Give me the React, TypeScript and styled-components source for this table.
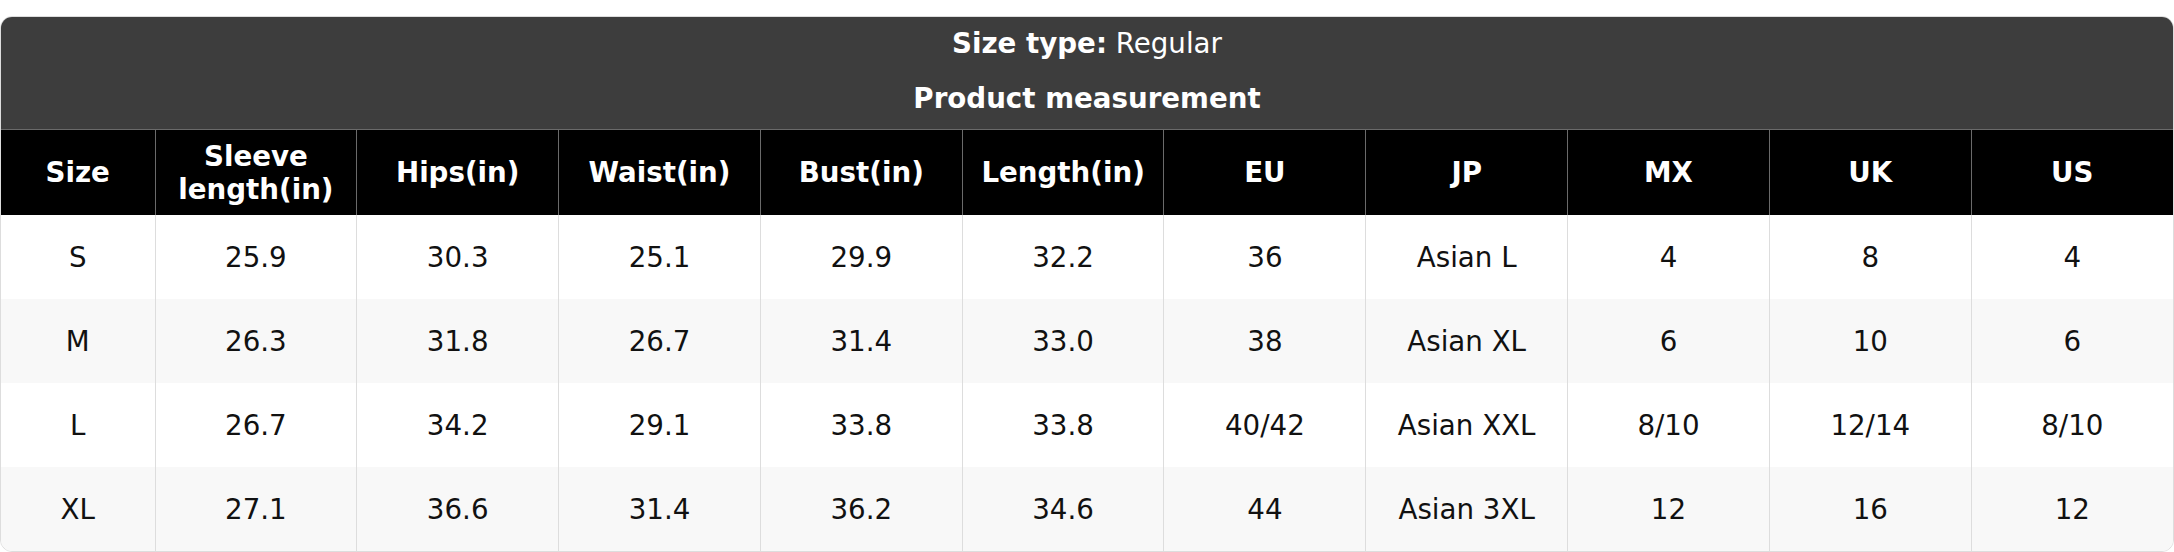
import styled, { createGlobalStyle } from "styled-components";

const GlobalStyle = createGlobalStyle`
  html, body {
    margin: 0;
    padding: 0;
    background: #ffffff;
  }
  body {
    font-family: "DejaVu Sans", "Liberation Sans", sans-serif;
  }
`;

const Page = styled.div`
  padding-top: 16px;
`;

const ChartCard = styled.div`
  border: 1px solid #dddddd;
  border-radius: 12px;
  overflow: hidden;
  background: #ffffff;
`;

const ChartHeader = styled.div`
  display: flex;
  flex-direction: column;
  align-items: center;
  gap: 22px;
  padding: 10px 0 14px;
  background: #3d3d3d;
  color: #ffffff;
  font-size: 27.7px;
  line-height: 33px;
`;

const HeaderLine = styled.div<{ $bold?: boolean }>`
  font-weight: ${(p) => (p.$bold ? 700 : 400)};

  strong {
    font-weight: 700;
  }
`;

const SizeTable = styled.table`
  width: 100%;
  table-layout: fixed;
  border-collapse: collapse;
  font-size: 27.7px;
  line-height: 33px;
`;

const HeadCell = styled.th`
  height: 85px;
  padding: 0 6px;
  background: #000000;
  color: #ffffff;
  font-weight: 700;
  text-align: center;
  vertical-align: middle;
  border: 1px solid #6a6a6a;
  border-bottom: none;

  &:first-child {
    border-left: none;
  }
  &:last-child {
    border-right: none;
  }
`;

const BodyRow = styled.tr<{ $striped: boolean }>`
  background: ${(p) => (p.$striped ? "#f8f8f8" : "#ffffff")};
`;

const BodyCell = styled.td`
  height: 84px;
  padding: 0 6px;
  color: #111111;
  text-align: center;
  vertical-align: middle;
  border-left: 1px solid #dddddd;

  &:first-child {
    border-left: none;
  }
`;

const columns = [
  "Size",
  "Sleeve length(in)",
  "Hips(in)",
  "Waist(in)",
  "Bust(in)",
  "Length(in)",
  "EU",
  "JP",
  "MX",
  "UK",
  "US",
];

const rows = [
  ["S", "25.9", "30.3", "25.1", "29.9", "32.2", "36", "Asian L", "4", "8", "4"],
  ["M", "26.3", "31.8", "26.7", "31.4", "33.0", "38", "Asian XL", "6", "10", "6"],
  ["L", "26.7", "34.2", "29.1", "33.8", "33.8", "40/42", "Asian XXL", "8/10", "12/14", "8/10"],
  ["XL", "27.1", "36.6", "31.4", "36.2", "34.6", "44", "Asian 3XL", "12", "16", "12"],
];

export default function App() {
  return (
    <Page>
      <GlobalStyle />
      <ChartCard>
        <ChartHeader>
          <HeaderLine>
            <strong>Size type:</strong> Regular
          </HeaderLine>
          <HeaderLine $bold>Product measurement</HeaderLine>
        </ChartHeader>
        <SizeTable>
          <colgroup>
            <col style={{ width: 154 }} />
            {columns.slice(1).map((c) => (
              <col key={c} />
            ))}
          </colgroup>
          <thead>
            <tr>
              {columns.map((c) => (
                <HeadCell key={c}>{c}</HeadCell>
              ))}
            </tr>
          </thead>
          <tbody>
            {rows.map((r, i) => (
              <BodyRow key={r[0]} $striped={i % 2 === 1}>
                {r.map((v, j) => (
                  <BodyCell key={j}>{v}</BodyCell>
                ))}
              </BodyRow>
            ))}
          </tbody>
        </SizeTable>
      </ChartCard>
    </Page>
  );
}
